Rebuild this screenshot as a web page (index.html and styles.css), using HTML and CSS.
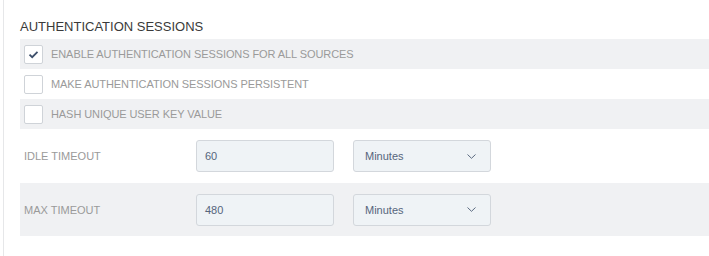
FILE: index.html
```html
<!DOCTYPE html>
<html lang="en">
<head>
    <meta charset="UTF-8">
    <title>Authentication Sessions</title>
    <link rel="stylesheet" href="styles.css">
</head>
<body>
    <div class="panel">
        <h2>AUTHENTICATION SESSIONS</h2>

        <div class="row shaded">
            <span class="check checked">
                <svg width="11" height="9" viewBox="0 0 11 9"><path d="M1.5 4.6 L4.2 7.2 L9.5 1.8" fill="none" stroke="#3d4f6b" stroke-width="1.8"/></svg>
            </span>
            <span class="check-label">ENABLE AUTHENTICATION SESSIONS FOR ALL SOURCES</span>
        </div>
        <div class="row">
            <span class="check"></span>
            <span class="check-label">MAKE AUTHENTICATION SESSIONS PERSISTENT</span>
        </div>
        <div class="row shaded">
            <span class="check"></span>
            <span class="check-label">HASH UNIQUE USER KEY VALUE</span>
        </div>

        <div class="field">
            <label class="field-label">IDLE TIMEOUT</label>
            <div class="input">60</div>
            <div class="select">
                <span>Minutes</span>
                <svg width="9" height="5" viewBox="0 0 9 5"><path d="M0.5 0.5 L4.5 4.3 L8.5 0.5" fill="none" stroke="#5b6a80" stroke-width="1"/></svg>
            </div>
        </div>
        <div class="field shaded">
            <label class="field-label">MAX TIMEOUT</label>
            <div class="input">480</div>
            <div class="select">
                <span>Minutes</span>
                <svg width="9" height="5" viewBox="0 0 9 5"><path d="M0.5 0.5 L4.5 4.3 L8.5 0.5" fill="none" stroke="#5b6a80" stroke-width="1"/></svg>
            </div>
        </div>
    </div>
</body>
</html>
```

FILE: styles.css
```css
body {
    margin: 0;
    font-family: "Liberation Sans", Arial, sans-serif;
    background-color: #fff;
}
.panel {
    margin-left: 3px;
    border-left: 1px solid #e6e7e9;
    padding: 17px 0 0 16px;
    height: 239px;
}
h2 {
    margin: 0 0 2px 0;
    font-size: 13px;
    font-weight: normal;
    line-height: 20px;
    color: #3a3a3a;
}
.row {
    display: flex;
    align-items: center;
    height: 30px;
    padding-left: 4px;
}
.shaded {
    background-color: #f0f1f3;
}
.check {
    width: 17px;
    height: 17px;
    border: 1px solid #cfd3d8;
    border-radius: 2px;
    background-color: #fff;
    display: flex;
    align-items: center;
    justify-content: center;
}
.check-label {
    margin-left: 8px;
    font-size: 11px;
    letter-spacing: -0.08px;
    color: #9a9a9a;
}
.field {
    display: flex;
    align-items: center;
    height: 54px;
    padding-left: 4px;
}
.field.shaded {
    height: 53px;
}
.field-label {
    width: 172px;
    font-size: 11px;
    color: #9a9a9a;
}
.input, .select {
    box-sizing: border-box;
    width: 138px;
    height: 32px;
    border: 1px solid #d3d7dc;
    border-radius: 3px;
    background-color: #eff3f6;
    font-size: 11px;
    color: #56657c;
    display: flex;
    align-items: center;
}
.input {
    padding-left: 8px;
}
.select {
    margin-left: 19px;
    padding: 0 14px 0 11px;
    justify-content: space-between;
}
```
